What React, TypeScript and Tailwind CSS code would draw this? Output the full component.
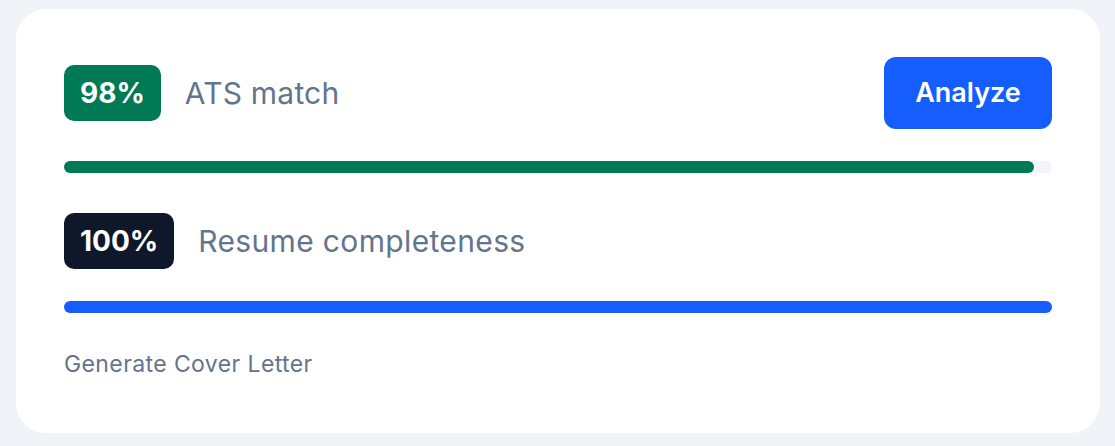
import React from "react";

export default function App() {
  return (
    <div
      className="w-[1115px] h-[446px] bg-[#f0f4f9] pt-[9px] pl-[16px]"
      style={{ fontFamily: "Inter, 'Noto Sans', sans-serif" }}
    >
      <div className="w-[1084px] h-[424px] bg-white rounded-[30px] px-[48px] pt-[48px]">
        <div className="flex items-center justify-between h-[72px]">
          <div className="flex items-center gap-6">
            <div className="h-[56px] px-4 rounded-[10px] bg-[#007a55] text-white font-bold text-[28px] flex items-center">
              98%
            </div>
            <div className="text-[30px] tracking-[0.2px] text-[#62748e]">ATS match</div>
          </div>
          <button className="h-[72px] w-[168px] rounded-[12px] bg-[#155dfc] text-white font-semibold text-[27px] flex items-center justify-center">
            Analyze
          </button>
        </div>
        <div className="mt-[32px] h-[12px] rounded-full bg-[#f1f5f9]">
          <div className="h-full rounded-full bg-[#007a55]" style={{ width: "98.2%" }} />
        </div>
        <div className="mt-[40px] flex items-center gap-6 h-[56px]">
          <div className="h-[56px] px-4 rounded-[10px] bg-[#0f172b] text-white font-bold text-[28px] flex items-center">
            100%
          </div>
          <div className="text-[30px] tracking-[0.35px] text-[#62748e]">Resume completeness</div>
        </div>
        <div className="mt-[32px] h-[12px] rounded-full bg-[#f1f5f9]">
          <div className="h-full rounded-full bg-[#155dfc]" style={{ width: "100%" }} />
        </div>
        <div className="mt-[35px] text-[23px] tracking-[0.4px] leading-[32px] text-[#62748e]">Generate Cover Letter</div>
      </div>
    </div>
  );
}
